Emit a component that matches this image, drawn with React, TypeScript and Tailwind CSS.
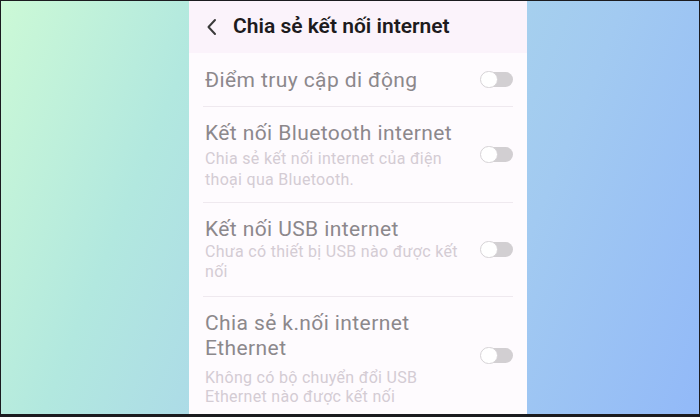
import React from 'react'

// Màn hình "Chia sẻ kết nối internet" — điện thoại ở giữa, nền gradient hai bên.
const rows = [
  { title: ['Điểm truy cập di động'], sub: [] as string[] },
  { title: ['Kết nối Bluetooth internet'], sub: ['Chia sẻ kết nối internet của điện', 'thoại qua Bluetooth.'] },
  { title: ['Kết nối USB internet'], sub: ['Chưa có thiết bị USB nào được kết', 'nối'] },
  { title: ['Chia sẻ k.nối internet', 'Ethernet'], sub: ['Không có bộ chuyển đổi USB', 'Ethernet nào được kết nối'] },
]

function Toggle() {
  return (
    <div className="relative w-[33px] h-[17px] shrink-0">
      <div className="absolute inset-y-[1px] left-[4px] right-0 rounded-full bg-[#d2cfd2]" />
      <div className="absolute left-0 top-0 w-[18px] h-[17px] rounded-full bg-white border border-[#d6d3d6]" />
    </div>
  )
}

const titleCls = 'text-[21px] leading-[25px] text-[#8c888c] tracking-[0.4px]'
const subCls = 'text-[16px] text-[#d4ccd4] tracking-[0.3px]'

export default function App() {
  return (
    <div
      className="w-[700px] h-[417px] overflow-hidden border border-[#1b1b1f] border-b-[3px] bg-[linear-gradient(112deg,#ccf9d6_0%,#b2e8df_24%,#aad6ea_48%,#a2caf1_72%,#92b9f8_100%)] flex"
      style={{ fontFamily: 'Roboto, "Noto Sans", sans-serif' }}
    >
      <div className="w-[188px] shrink-0" />
      <div className="w-[338px] shrink-0 bg-[#fefbfe] flex flex-col">
        <div className="h-[52px] shrink-0 bg-[#fbf3fb] flex items-center pl-[17px]">
          <svg width="12" height="18" viewBox="0 0 12 18" fill="none" className="mr-[15px]">
            <path d="M9 2L2.5 9L9 16" stroke="#3a3a3a" strokeWidth="2" strokeLinecap="round" strokeLinejoin="round" />
          </svg>
          <span className="text-[21px] font-semibold text-[#1d1b1d]">Chia sẻ kết nối internet</span>
        </div>

        {/* hàng 1 */}
        <div className="mx-[14px] h-[54px] shrink-0 flex items-center border-b border-[#efe9ef]">
          <div className={`flex-1 pl-[2px] pt-[2px] ${titleCls}`}>{rows[0].title[0]}</div>
          <Toggle />
        </div>

        {/* hàng 2 */}
        <div className="mx-[14px] h-[96px] shrink-0 flex items-center border-b border-[#efe9ef]">
          <div className="flex-1 pl-[2px] pt-[1px]">
            <div className={titleCls}>{rows[1].title[0]}</div>
            <div className={`mt-[2px] leading-[21px] ${subCls}`}>
              {rows[1].sub.map(s => <div key={s}>{s}</div>)}
            </div>
          </div>
          <Toggle />
        </div>

        {/* hàng 3 */}
        <div className="mx-[14px] h-[94px] shrink-0 flex items-center border-b border-[#efe9ef]">
          <div className="flex-1 pl-[2px]">
            <div className={titleCls}>{rows[2].title[0]}</div>
            <div className={`mt-[0px] leading-[20px] ${subCls}`}>
              {rows[2].sub.map(s => <div key={s}>{s}</div>)}
            </div>
          </div>
          <Toggle />
        </div>

        {/* hàng 4 */}
        <div className="mx-[14px] flex-1 flex items-center">
          <div className="flex-1 pl-[2px] pt-[6px]">
            {rows[3].title.map(t => (
              <div key={t} className={titleCls}>{t}</div>
            ))}
            <div className={`mt-[7px] leading-[19px] ${subCls}`}>
              {rows[3].sub.map(s => <div key={s}>{s}</div>)}
            </div>
          </div>
          <Toggle />
        </div>
      </div>
      <div className="flex-1" />
    </div>
  )
}
